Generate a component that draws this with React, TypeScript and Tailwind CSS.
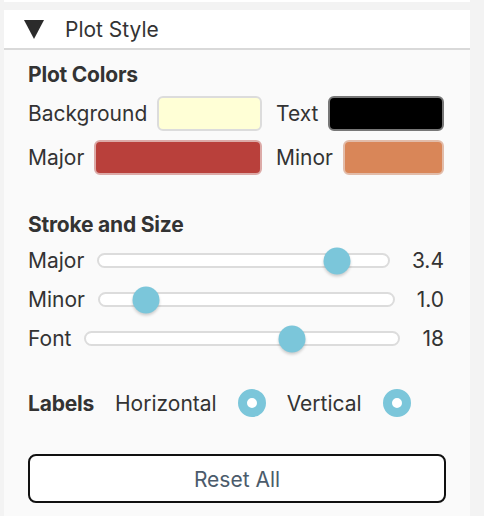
const swatches = [
  { label: 'Background', color: 'bg-[#ffffd6]', border: 'border-[#dcdcdc]' },
  { label: 'Text', color: 'bg-black', border: 'border-[#777777]' },
  { label: 'Major', color: 'bg-[#b9403b]', border: 'border-[#dcaaa7]' },
  { label: 'Minor', color: 'bg-[#d98658]', border: 'border-[#e2bca9]' },
];

const sliders = [
  { label: 'Major', value: '3.4', pct: 85 },
  { label: 'Minor', value: '1.0', pct: 13 },
  { label: 'Font', value: '18', pct: 67 },
];

const Slider = ({ pct }: { pct: number }) => (
  <div className="relative flex-1 h-[15px]">
    <div className="absolute inset-0 rounded-full border-2 border-[#dcdcdc] bg-white" />
    <div className="absolute inset-y-0 left-[13px] right-[13px]">
      <div
        className="absolute top-1/2 h-[27px] w-[27px] -translate-x-1/2 -translate-y-1/2 rounded-full bg-[#7bc6da] shadow-[0_2px_3px_rgba(0,0,0,0.18)]"
        style={{ left: `${pct}%` }}
      />
    </div>
  </div>
);

const Radio = () => (
  <div className="h-[28px] w-[28px] rounded-full border-[9px] border-[#7bc6da] bg-white" />
);

export default function App() {
  return (
    <div className="min-h-screen bg-[#f3f3f3] font-['Inter',sans-serif] text-[#333333]">
      <div className="ml-[4px] w-[466px]">
        <div className="h-[2px] bg-white" />
        <div className="mt-[8px] flex h-[40px] items-center border-b-2 border-[#d9d9d9] bg-white">
          <svg width="20" height="19" viewBox="0 0 20 19" className="ml-[20px]">
            <polygon points="0,0 20,0 10,19" fill="#2b2b2b" />
          </svg>
          <span className="ml-[21px] text-[21px] leading-none">Plot Style</span>
        </div>
        <div className="min-h-[466px] bg-[#fafafa] px-[24px] pt-[13px]">
          <div className="h-[24px] text-[21px] font-bold leading-[24px] tracking-[-0.01em]">
            Plot Colors
          </div>
          <div className="mt-[9px] grid grid-cols-[234px_168px] gap-x-[14px] gap-y-[9px]">
            {swatches.map((s) => (
              <div key={s.label} className="flex h-[35px] items-center gap-[10px]">
                <span className="text-[21px] leading-none">{s.label}</span>
                <div className={`h-[35px] flex-1 rounded-[6px] border-2 ${s.color} ${s.border}`} />
              </div>
            ))}
          </div>
          <div className="mt-[38px] h-[24px] text-[21px] font-bold leading-[24px] tracking-[-0.01em]">
            Stroke and Size
          </div>
          <div className="mt-[4px] pr-[2px]">
            {sliders.map((s) => (
              <div key={s.label} className="flex h-[39px] items-center">
                <span className="text-[21px] leading-none">{s.label}</span>
                <div className="ml-[13px] mr-[22px] flex flex-1 items-center">
                  <Slider pct={s.pct} />
                </div>
                <span className="text-[21px] leading-none">{s.value}</span>
              </div>
            ))}
          </div>
          <div className="mt-[30px] flex h-[30px] items-center gap-[21px]">
            <span className="text-[21px] font-bold leading-none tracking-[-0.01em]">Labels</span>
            <span className="text-[21px] leading-none">Horizontal</span>
            <Radio />
            <span className="text-[21px] leading-none">Vertical</span>
            <Radio />
          </div>
          <button className="mt-[36px] flex h-[49px] w-full items-center justify-center rounded-[8px] border-2 border-[#111111] bg-white pt-[2px] text-[21px] text-[#4b5b6b]">
            Reset All
          </button>
        </div>
      </div>
    </div>
  );
}
